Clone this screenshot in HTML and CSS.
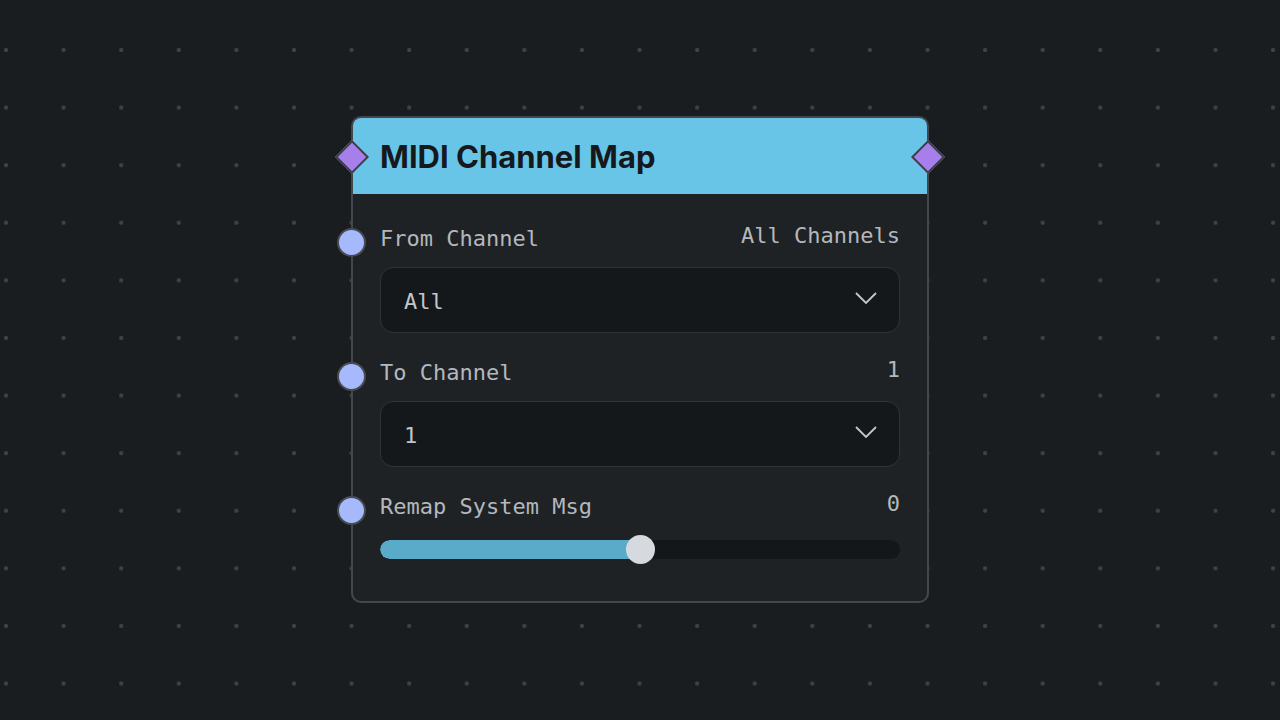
FILE: index.html
```html
<!DOCTYPE html>
<html lang="en">
<head>
<meta charset="utf-8">
<title>MIDI Channel Map</title>
<link rel="stylesheet" href="styles.css">
</head>
<body>
<main class="canvas">
  <section class="node">
    <span class="pin pin-in"></span>
    <span class="pin pin-out"></span>
    <header class="node-head">
      <h1 class="node-title">MIDI Channel Map</h1>
    </header>
    <div class="node-body">
      <div class="field">
        <span class="port"></span>
        <div class="field-row">
          <span class="field-label">From Channel</span>
          <span class="field-value">All Channels</span>
        </div>
        <div class="select">
          <span class="select-text">All</span>
          <svg class="chevron" viewBox="0 0 22 12" width="22" height="12"><path d="M1 1 L11 11 L21 1" /></svg>
        </div>
      </div>
      <div class="field">
        <span class="port"></span>
        <div class="field-row">
          <span class="field-label">To Channel</span>
          <span class="field-value">1</span>
        </div>
        <div class="select">
          <span class="select-text">1</span>
          <svg class="chevron" viewBox="0 0 22 12" width="22" height="12"><path d="M1 1 L11 11 L21 1" /></svg>
        </div>
      </div>
      <div class="field">
        <span class="port"></span>
        <div class="field-row">
          <span class="field-label">Remap System Msg</span>
          <span class="field-value">0</span>
        </div>
        <div class="slider">
          <div class="track">
            <div class="track-fill" style="width: 50%"></div>
          </div>
          <span class="thumb" style="left: 50%"></span>
        </div>
      </div>
    </div>
  </section>
</main>
</body>
</html>
```

FILE: styles.css
```css
html, body {
  margin: 0;
  height: 100%;
}

body {
  background-color: #1a1d20;
  background-image: radial-gradient(circle, #3e4145 0, #3e4145 1.7px, transparent 2.5px);
  background-size: 57.6px 57.6px;
  background-position: -22.8px 21.2px;
  font-family: "DejaVu Sans Mono", monospace;
}

.canvas {
  height: 100vh;
  display: flex;
  align-items: center;
  justify-content: center;
}

.node {
  position: relative;
  box-sizing: border-box;
  width: 578px;
  background: #1f2225;
  border: 2px solid #43474c;
  border-radius: 10px;
  margin-top: -1px;
}

.node-head {
  height: 76px;
  background: #69c5e7;
  border-radius: 8px 8px 0 0;
  display: flex;
  align-items: center;
  padding-left: 27px;
}

.node-title {
  margin: 0;
  font-family: Inter, "Noto Sans", sans-serif;
  font-weight: 700;
  font-size: 31px;
  letter-spacing: 0;
  color: #16191c;
}

.pin {
  position: absolute;
  top: 27px;
  width: 20px;
  height: 20px;
  background: #a77fea;
  border: 2px solid #3b3f46;
  transform: rotate(45deg);
}

.pin-in { left: -13px; }
.pin-out { right: -13px; }

.node-body {
  padding: 30px 27px 37px;
  display: flex;
  flex-direction: column;
  gap: 25px;
}

.field {
  position: relative;
  display: flex;
  flex-direction: column;
  gap: 16px;
}

.port {
  position: absolute;
  left: -43px;
  top: 4px;
  width: 25px;
  height: 25px;
  border-radius: 50%;
  background: #a6b9fd;
  border: 2px solid #474b52;
}

.field-row {
  display: flex;
  justify-content: space-between;
  align-items: flex-start;
  height: 27px;
  font-size: 22px;
  line-height: 24px;
  color: #b3b8bd;
}

.field-label {
  margin-top: 3px;
}

.select {
  box-sizing: border-box;
  height: 66px;
  background: #15181b;
  border: 1px solid #303338;
  border-radius: 13px;
  display: flex;
  align-items: center;
  justify-content: space-between;
  padding: 0 22px 0 23px;
}

.select-text {
  font-size: 22px;
  color: #c2c6ca;
  margin-top: 3px;
}

.chevron {
  fill: none;
  stroke: #c4c8cc;
  stroke-width: 1.8;
  margin-top: -4px;
}

.slider {
  position: relative;
  height: 29px;
  display: flex;
  align-items: center;
}

.track {
  flex: 1;
  height: 19px;
  border-radius: 10px;
  background: #141719;
  overflow: hidden;
}

.track-fill {
  height: 100%;
  background: #5aabca;
  border-radius: 10px 0 0 10px;
}

.thumb {
  position: absolute;
  top: 0;
  width: 29px;
  height: 29px;
  margin-left: -14.5px;
  border-radius: 50%;
  background: #d6dadf;
}
```
